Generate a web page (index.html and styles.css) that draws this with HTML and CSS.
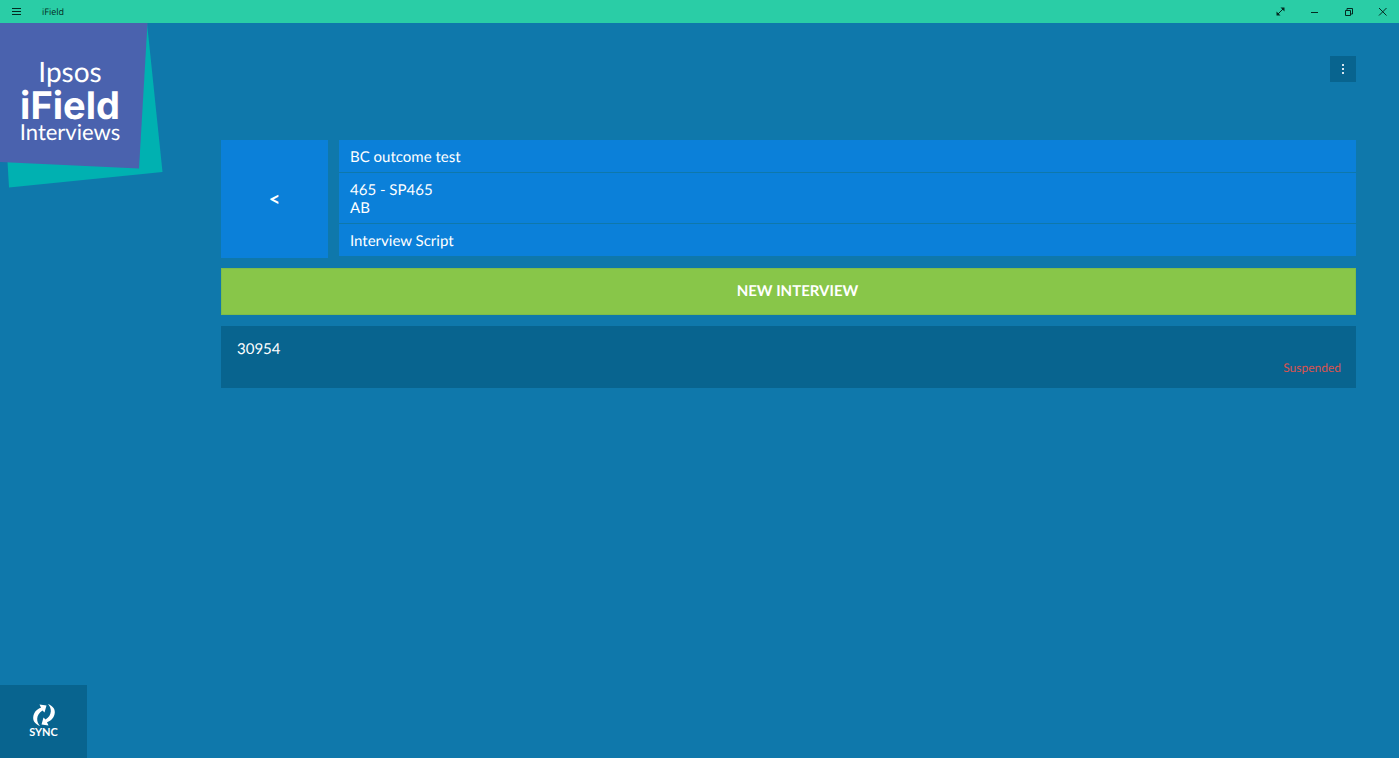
FILE: index.html
```
<!DOCTYPE html>
<html lang="en">
<head>
    <meta charset="UTF-8">
    <meta name="viewport" content="width=device-width, initial-scale=1.0">
    <title>iField</title>
    <link rel="stylesheet" href="styles.css">
</head>
<body>
    <header class="titlebar">
        <button class="titlebar-button" aria-label="Menu">
            <svg width="11" height="11" viewBox="0 0 11 11"><path d="M1 2.5h9M1 5.5h9M1 8.5h9"/></svg>
        </button>
        <span class="titlebar-name">iField</span>
        <div class="window-controls">
            <button class="titlebar-button" aria-label="Full screen">
                <svg width="11" height="11" viewBox="0 0 11 11"><path d="M3 8l5-5"/><path class="arrow-tips" d="M5.500 1.500h4v4zM1.500 5.500v4h4z"/></svg>
            </button>
            <button class="titlebar-button" aria-label="Minimize">
                <svg width="11" height="11" viewBox="0 0 11 11"><path d="M2 6.5h7"/></svg>
            </button>
            <button class="titlebar-button" aria-label="Restore">
                <svg width="11" height="11" viewBox="0 0 11 11"><path d="M2.5 4.5h5v5h-5zM4 4v-1.500h5.500v5.500h-1.500"/></svg>
            </button>
            <button class="titlebar-button" aria-label="Close">
                <svg width="11" height="11" viewBox="0 0 11 11"><path d="M2 2l7.500 7.500M9.500 2l-7.500 7.500"/></svg>
            </button>
        </div>
    </header>
    <div class="app">
        <aside class="sidebar">
            <div class="logo">
                <svg class="logo-shape" width="163" height="165" viewBox="0 0 163 165">
                    <path fill="#00b1b1" d="M147 0L162.500 149L9 164.500L7 130z"/>
                    <path fill="#4a62ae" d="M0 0h147.500L139 145.500L0 139z"/>
                </svg>
                <span class="logo-company">Ipsos</span>
                <span class="logo-product">iField</span>
                <span class="logo-section">Interviews</span>
            </div>
            <button class="sync">
                <svg width="24" height="24" viewBox="0 0 24 24" fill="#fff">
                    <path d="M8 23C3 21 1 18 1.200 14.500C1.500 10 4.500 6 9 4.800L7.500 1.500L14.500 2.500L12.500 9.500L10.500 7.500C7 9.500 5.500 12.500 5.200 15.500C5 18.500 6 20.500 8 23z"/>
                    <path d="M16 1C21 3 23 6 22.800 9.500C22.500 14 19.500 18 15 19.200L16.500 22.500L9.500 21.500L11.500 14.500L13.500 16.500C17 14.500 18.500 11.500 18.800 8.500C19 5.500 18 3.500 16 1z"/>
                </svg>
                <span>SYNC</span>
            </button>
        </aside>
        <main class="content">
            <div class="toolbar">
                <button class="more" aria-label="More options">
                    <svg width="4" height="12" viewBox="0 0 4 12" fill="#d5e4ee"><path d="M1 1h2v2H1zM1 5h2v2H1zM1 9h2v2H1z"/></svg>
                </button>
            </div>
            <div class="summary">
                <button class="back" aria-label="Back">&lt;</button>
                <div class="details">
                    <div class="detail">BC outcome test</div>
                    <div class="detail">465 - SP465<br>AB</div>
                    <div class="detail">Interview Script</div>
                </div>
            </div>
            <button class="new-interview">NEW INTERVIEW</button>
            <a class="interview" href="#">
                <span class="interview-id">30954</span>
                <span class="interview-status">Suspended</span>
            </a>
        </main>
    </div>
</body>
</html>
```
FILE: styles.css
```
* {
    box-sizing: border-box;
}
body {
    display: flex;
    flex-direction: column;
    min-height: 100vh;
    margin: 0;
    background-color: #0f78ab;
    color: #ffffff;
    font-family: Lato, sans-serif;
    font-size: 15px;
    line-height: 18px;
    text-rendering: geometricPrecision;
}
button {
    padding: 0;
    border: none;
    color: inherit;
    font: inherit;
    text-rendering: inherit;
    cursor: pointer;
}

/* Window title bar */
.titlebar {
    display: flex;
    align-items: stretch;
    height: 23px;
    background-color: #2acda6;
    color: #042a21;
}
.titlebar-button {
    display: flex;
    align-items: center;
    justify-content: center;
    width: 33px;
    background: none;
}
.titlebar-button svg {
    fill: none;
    stroke: #042a21;
}
.titlebar-button .arrow-tips {
    fill: #042a21;
    stroke: none;
}
.titlebar-name {
    padding-left: 9px;
    font-family: "Open Sans", sans-serif;
    font-size: 9px;
    font-weight: 500;
    line-height: 23px;
}
.window-controls {
    display: flex;
    margin-left: auto;
}
.window-controls .titlebar-button {
    width: 34px;
}

.app {
    display: flex;
    flex: 1;
}

/* Logo and sync */
.sidebar {
    display: flex;
    flex-direction: column;
    justify-content: space-between;
    align-items: flex-start;
    width: 221px;
}
.logo {
    position: relative;
    display: flex;
    flex-direction: column;
    align-items: center;
    width: 140px;
    padding-top: 32px;
}
.logo-shape {
    position: absolute;
    top: 0;
    left: 0;
}
.logo span {
    position: relative;
}
.logo-company {
    font-size: 28px;
    line-height: 32px;
}
.logo-product {
    font-family: Inter, sans-serif;
    font-size: 38px;
    font-weight: 700;
    line-height: 38px;
}
.logo-section {
    font-size: 22px;
    line-height: 14px;
}
.sync {
    display: flex;
    flex-direction: column;
    align-items: center;
    justify-content: center;
    width: 87px;
    height: 73px;
    padding-bottom: 2px;
    background-color: #08648f;
    font-size: 11px;
    font-weight: 700;
    line-height: 12px;
}

/* Interview list */
.content {
    flex: 1;
    padding-right: 43px;
}
.toolbar {
    display: flex;
    justify-content: flex-end;
    height: 117px;
    padding-top: 33px;
}
.more {
    display: flex;
    align-items: center;
    justify-content: center;
    width: 26px;
    height: 26px;
    background-color: #08648f;
}
.summary {
    display: flex;
    align-items: flex-start;
    gap: 11px;
}
.back {
    width: 107px;
    height: 118px;
    background-color: #0b80d9;
    font-size: 20px;
    font-weight: 700;
}
.details {
    display: flex;
    flex: 1;
    flex-direction: column;
    gap: 1px;
}
.detail {
    padding: 8px 11px 6px;
    background-color: #0b80d9;
}
.new-interview {
    display: block;
    width: 100%;
    height: 47px;
    margin: 10px 0 11px;
    padding: 0 0 2px 18px;
    border: 1px solid #7dbd4a;
    background-color: #88c649;
    font-weight: 700;
}
.interview {
    display: flex;
    flex-direction: column;
    padding: 14px 15px 10px 16px;
    background-color: #08648f;
    color: #ffffff;
    text-decoration: none;
}
.interview-status {
    align-self: flex-end;
    color: #d9534f;
    font-size: 12px;
    line-height: 20px;
}
```
